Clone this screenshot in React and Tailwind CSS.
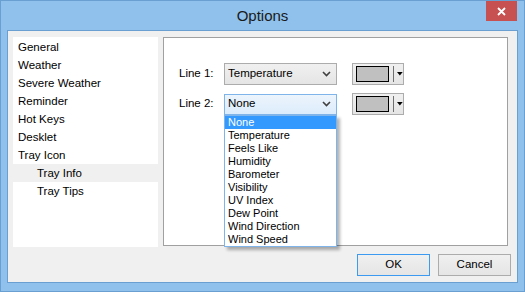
import React from 'react';

const sideItems = [
  { label: 'General' },
  { label: 'Weather' },
  { label: 'Severe Weather' },
  { label: 'Reminder' },
  { label: 'Hot Keys' },
  { label: 'Desklet' },
  { label: 'Tray Icon' },
  { label: 'Tray Info', child: true, selected: true },
  { label: 'Tray Tips', child: true },
];

const lineOptions = [
  'None',
  'Temperature',
  'Feels Like',
  'Humidity',
  'Barometer',
  'Visibility',
  'UV Index',
  'Dew Point',
  'Wind Direction',
  'Wind Speed',
];

function Chevron() {
  return (
    <svg width="9" height="6" viewBox="0 0 9 6" className="shrink-0">
      <polyline points="1,1 4.5,4.5 8,1" fill="none" stroke="#404040" strokeWidth="1.6" />
    </svg>
  );
}

function ColorButton() {
  return (
    <div className="w-[52px] h-[22px] border border-[#acacac] bg-gradient-to-b from-[#f0f0f0] to-[#e5e5e5] flex items-center pl-[3px]">
      {/* swatch */}
      <div className="w-[35px] h-[16px] border-[1.5px] border-black bg-[#c0c0c0]" />
      <div className="ml-[4px] w-px h-[16px] bg-[#707070]" />
      <svg width="6" height="4" viewBox="0 0 6 4" className="ml-[3px]">
        <polygon points="0,0 6,0 3,3.5" fill="#000" />
      </svg>
    </div>
  );
}

function Combo({ value, focused, open }) {
  return (
    <div className="relative">
      <div
        className={
          focused
            ? 'w-[113px] h-[21px] border border-[#7eb4ea] bg-gradient-to-b from-[#ecf4fc] to-[#dcecfc] flex items-center justify-between pl-[3px] pr-[5px]'
            : 'w-[113px] h-[22px] border border-[#acacac] bg-gradient-to-b from-[#f0f0f0] to-[#e5e5e5] flex items-center justify-between pl-[3px] pr-[5px]'
        }
      >
        <span className="text-[11.5px] text-black">{value}</span>
        <Chevron />
      </div>
      {open && (
        <div className="absolute left-0 top-[21px] z-10 w-[113px] border border-[#7eb4ea] bg-white shadow-[3px_3px_3px_rgba(0,0,0,0.3)]">
          {lineOptions.map((opt, i) => (
            <div
              key={opt}
              className={
                i === 0
                  ? 'h-[13px] leading-[13px] pl-[3px] text-[11px] bg-[#3399ff] text-white'
                  : 'h-[13px] leading-[13px] pl-[3px] text-[11px] text-black'
              }
            >
              {opt}
            </div>
          ))}
        </div>
      )}
    </div>
  );
}

export default function App() {
  return (
    <div
      className="w-[525px] h-[292px] bg-[#8fc1ec] border border-[#6a9fd2] flex flex-col overflow-hidden"
      style={{ fontFamily: '"Liberation Sans", Arial, sans-serif' }}
    >
      {/* Title bar */}
      <div className="h-[29px] relative flex items-center justify-center shrink-0">
        <span className="text-[15px] text-[#1a1a1a] mt-[2px]">Options</span>
        <div className="absolute right-[7px] top-0 w-[31px] h-[20px] bg-[#c75050] flex items-center justify-center">
          <svg width="9" height="9" viewBox="0 0 9 9">
            <path d="M1 1 L8 8 M8 1 L1 8" stroke="#fff" strokeWidth="1.8" />
          </svg>
        </div>
      </div>

      {/* Client area */}
      <div className="flex-1 mx-[6px] mb-[8px] border border-[#6a9fd2] bg-[#f0f0f0] flex flex-col px-[5px] pt-[6px]">
        <div className="flex gap-[5px]">
          {/* Left tree */}
          <div className="w-[145px] h-[210px] bg-white pt-[1px]">
            {sideItems.map((it) => (
              <div
                key={it.label}
                className={
                  (it.selected ? 'bg-[#f0f0f0] ' : '') +
                  (it.child ? 'pl-[24px] ' : 'pl-[5px] ') +
                  'h-[18px] leading-[18px] text-[11.5px] text-black'
                }
              >
                {it.label}
              </div>
            ))}
          </div>

          {/* Right panel */}
          <div className="w-[345px] h-[209px] border border-[#a0a0a0] bg-white pt-[25px] pl-[15px] flex flex-col gap-[8px]">
            <div className="flex items-center">
              <span className="w-[45px] text-[11.5px] text-black">Line 1:</span>
              <Combo value="Temperature" />
              <div className="ml-[15px]">
                <ColorButton />
              </div>
            </div>
            <div className="flex items-center">
              <span className="w-[45px] text-[11.5px] text-black">Line 2:</span>
              <Combo value="None" focused open />
              <div className="ml-[15px]">
                <ColorButton />
              </div>
            </div>
          </div>
        </div>

        {/* Buttons */}
        <div className="flex justify-end gap-[8px] mt-[7px] pr-[1px]">
          <button className="w-[73px] h-[22px] border border-[#3c9bf0] bg-gradient-to-b from-[#f0f0f0] to-[#e5e5e5] text-[11.5px] text-black">
            OK
          </button>
          <button className="w-[73px] h-[22px] border border-[#acacac] bg-gradient-to-b from-[#f0f0f0] to-[#e5e5e5] text-[11.5px] text-black">
            Cancel
          </button>
        </div>
      </div>
    </div>
  );
}
